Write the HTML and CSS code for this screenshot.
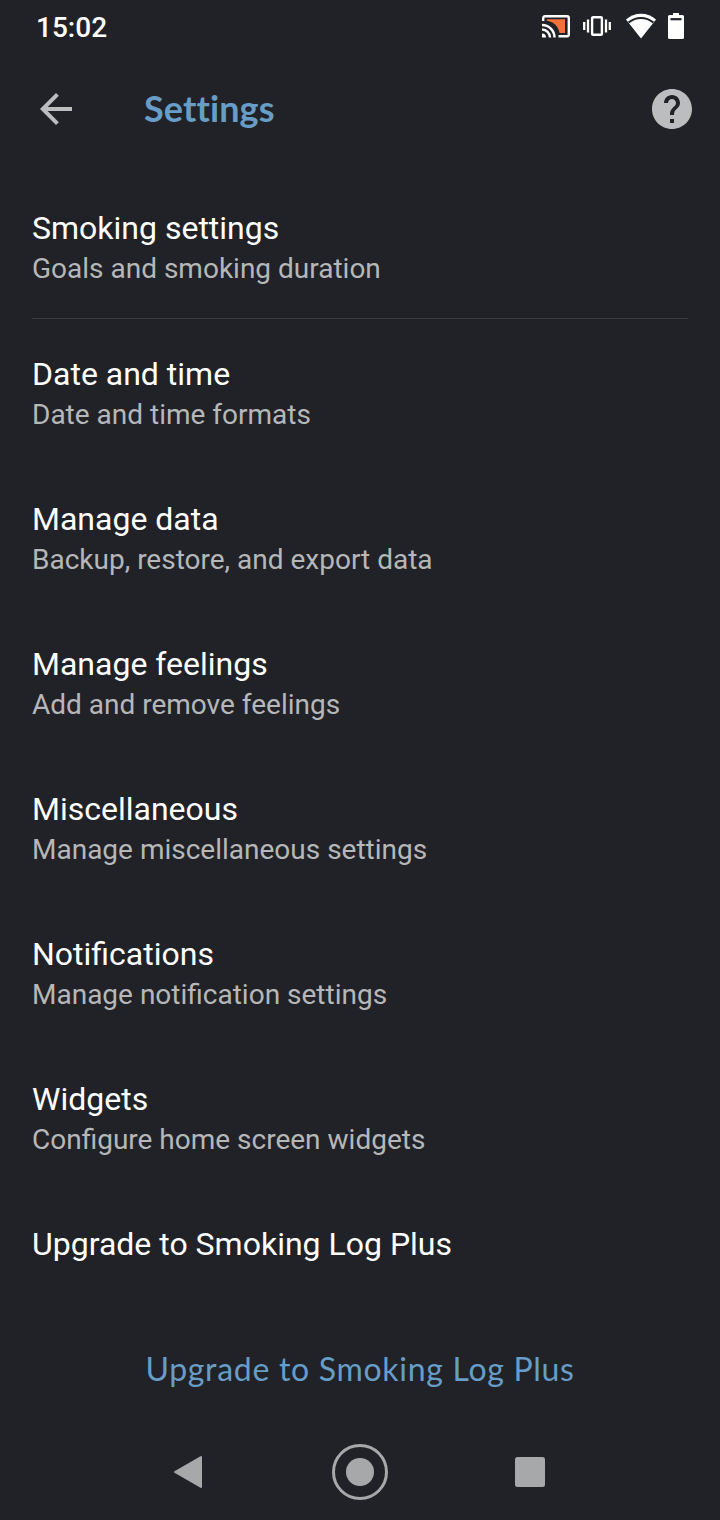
FILE: index.html
```html
<!DOCTYPE html>
<html lang="en">

<head>
    <meta charset="UTF-8">
    <meta name="viewport" content="width=device-width, initial-scale=1.0">
    <title>Settings</title>
    <link rel="stylesheet" href="styles.css">
</head>

<body>
    <div class="status-bar">
        <span class="clock">15:02</span>
        <div class="status-icons">
            <!-- cast -->
            <svg width="28" height="24" viewBox="0 0 28 24">
                <path d="M4.8 5.2H23V19H17.5C16.5 12 11 7.5 4.8 6.8Z" fill="#f4703c"/>
                <path d="M1.2 7V4.2Q1.2 2.2 3 2.2H25Q26.8 2.2 26.8 4V20.5Q26.8 22.3 25 22.3H16.5" fill="none" stroke="#fff" stroke-width="2.4"/>
                <path d="M0 11A12.5 12.5 0 0 1 12.5 23.5M0 15.5A8 8 0 0 1 8 23.5" fill="none" stroke="#fff" stroke-width="2.4"/>
                <path d="M0 19.5A4 4 0 0 1 4 23.5H0Z" fill="#fff"/>
            </svg>
            <!-- vibrate -->
            <svg class="vibrate" width="28" height="20" viewBox="0 0 28 20">
                <rect x="9.1" y="1.2" width="9.8" height="17.6" rx="1" fill="none" stroke="#fff" stroke-width="2.4"/>
                <path d="M1.2 6V14M5 3.5V16.5M23 3.5V16.5M26.8 6V14" fill="none" stroke="#fff" stroke-width="2.3"/>
            </svg>
            <!-- wifi -->
            <svg class="wifi" width="30" height="26" viewBox="0 0 30 26">
                <path d="M0 6.5Q6.5 .8 15 .8T30 6.5L15 25.5Z" fill="#fff"/>
                <path d="M2.6 9.6Q8.2 5 15 5T27.4 9.6" fill="none" stroke="#212227" stroke-width="2"/>
            </svg>
            <!-- battery -->
            <svg class="battery" width="16" height="26" viewBox="0 0 16 26">
                <path d="M5 0H11V2H14.5Q16 2 16 3.5V24.5Q16 26 14.5 26H1.5Q0 26 0 24.5V3.5Q0 2 1.5 2H5Z" fill="#fff"/>
                <path d="M2.5 6.2H13.5" stroke="#212227" stroke-width="2.2"/>
            </svg>
        </div>
    </div>

    <div class="toolbar">
        <svg width="48" height="48" viewBox="0 0 24 24">
            <path d="M20 11H7.83l5.59-5.59L12 4l-8 8 8 8 1.41-1.41L7.83 13H20v-2z" fill="#bcbdbe"/>
        </svg>
        <h1 class="page-title">Settings</h1>
        <svg width="48" height="48" viewBox="0 0 24 24">
            <path d="M12 2C6.48 2 2 6.48 2 12s4.48 10 10 10 10-4.48 10-10S17.52 2 12 2zm1 17h-2v-2h2v2zm2.07-7.75l-.9.92C13.45 12.9 13 13.5 13 15h-2v-.5c0-1.1.45-2.1 1.17-2.83l1.24-1.26c.37-.36.59-.86.59-1.41 0-1.1-.9-2-2-2s-2 .9-2 2H8c0-2.21 1.79-4 4-4s4 1.79 4 4c0 .88-.36 1.68-.93 2.25z" fill="#bcbdbe"/>
        </svg>
    </div>

    <div class="settings-list">
        <div class="item divider">
            <div class="title">Smoking settings</div>
            <div class="summary">Goals and smoking duration</div>
        </div>
        <div class="item">
            <div class="title">Date and time</div>
            <div class="summary">Date and time formats</div>
        </div>
        <div class="item">
            <div class="title">Manage data</div>
            <div class="summary">Backup, restore, and export data</div>
        </div>
        <div class="item">
            <div class="title">Manage feelings</div>
            <div class="summary">Add and remove feelings</div>
        </div>
        <div class="item">
            <div class="title">Miscellaneous</div>
            <div class="summary">Manage miscellaneous settings</div>
        </div>
        <div class="item">
            <div class="title">Notifications</div>
            <div class="summary">Manage notification settings</div>
        </div>
        <div class="item">
            <div class="title">Widgets</div>
            <div class="summary">Configure home screen widgets</div>
        </div>
        <div class="item">
            <div class="title">Upgrade to Smoking Log Plus</div>
        </div>
    </div>

    <button class="upgrade">Upgrade to Smoking Log Plus</button>

    <div class="nav-bar">
        <svg width="60" height="60" viewBox="0 0 60 60">
            <path d="M15 30L41 15V45Z" fill="#a7a8a9" stroke="#a7a8a9" stroke-width="2" stroke-linejoin="round"/>
        </svg>
        <svg width="60" height="60" viewBox="0 0 60 60">
            <circle cx="30" cy="30" r="26.5" fill="none" stroke="#a7a8a9" stroke-width="3"/>
            <circle cx="30" cy="30" r="14" fill="#a7a8a9"/>
        </svg>
        <svg width="60" height="60" viewBox="0 0 60 60">
            <rect x="15" y="15" width="30" height="30" rx="2.5" fill="#a7a8a9"/>
        </svg>
    </div>
</body>

</html>
```

FILE: styles.css
```css
* {
    margin: 0;
    padding: 0;
    box-sizing: border-box;
}

body {
    display: flex;
    flex-direction: column;
    width: 720px;
    height: 1520px;
    background: #212227;
    font-family: Roboto, sans-serif;
    color: #fff;
    overflow: hidden;
}

svg {
    display: block;
}

.status-bar {
    display: flex;
    justify-content: space-between;
    align-items: center;
    height: 52px;
    padding: 0 36px;
}

.clock {
    padding-top: 3px;
    font-size: 28px;
    font-weight: 500;
}

.status-icons {
    display: flex;
    align-items: center;
}

.vibrate {
    margin-left: 13px;
}

.wifi {
    margin-left: 15px;
}

.battery {
    margin-left: 12px;
}

.toolbar {
    display: flex;
    align-items: center;
    height: 112px;
    margin-top: 1px;
    padding: 0 24px 0 32px;
}

.page-title {
    flex: 1;
    margin-left: 64px;
    padding-bottom: 2px;
    font-family: Lato, sans-serif;
    font-size: 36px;
    font-weight: 700;
    letter-spacing: 0.1px;
    color: #679dc6;
}

.settings-list {
    padding: 8px 32px 0;
}

.item {
    padding: 34px 0 30px;
}

.divider {
    border-bottom: 1px solid #3a3b3f;
}

.title {
    font-size: 32px;
    line-height: 43px;
}

.summary {
    font-size: 28px;
    line-height: 38px;
    color: #b6b7b9;
}

.upgrade {
    height: 96px;
    margin-top: 24px;
    border: none;
    background: none;
    font-family: Lato, sans-serif;
    font-size: 32px;
    letter-spacing: 0.7px;
    color: #679dc6;
}

.nav-bar {
    display: flex;
    justify-content: center;
    align-items: center;
    gap: 110px;
    height: 96px;
    margin-top: auto;
}
```
